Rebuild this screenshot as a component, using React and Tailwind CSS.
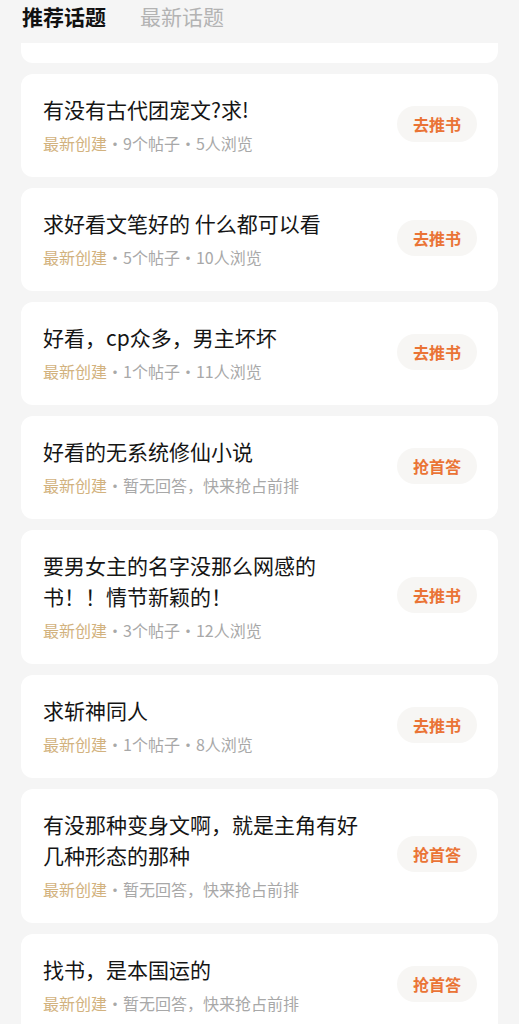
const topics = [
  { title: "有没有古代团宠文?求!", meta: "9个帖子·5人浏览", action: "去推书" },
  { title: "求好看文笔好的 什么都可以看", meta: "5个帖子·10人浏览", action: "去推书" },
  { title: "好看，cp众多，男主坏坏", meta: "1个帖子·11人浏览", action: "去推书" },
  { title: "好看的无系统修仙小说", meta: "暂无回答，快来抢占前排", action: "抢首答" },
  { title: "要男女主的名字没那么网感的书！！情节新颖的！", meta: "3个帖子·12人浏览", action: "去推书" },
  { title: "求斩神同人", meta: "1个帖子·8人浏览", action: "去推书" },
  { title: "有没那种变身文啊，就是主角有好几种形态的那种", meta: "暂无回答，快来抢占前排", action: "抢首答" },
  { title: "找书，是本国运的", meta: "暂无回答，快来抢占前排", action: "抢首答" },
];

export default function App() {
  return (
    <div
      className="min-h-screen h-[1024px] overflow-hidden bg-[#f5f5f5]"
      style={{ fontFamily: '"Noto Sans CJK SC", "Noto Sans", sans-serif' }}
    >
      {/* TABS */}
      <div className="h-[43px] flex items-center gap-[34px] px-[22px] pb-[10px]">
        <span className="text-[21px] font-bold text-[#111]">推荐话题</span>
        <span className="text-[21px] text-[#b3b3b3]">最新话题</span>
      </div>

      <div className="flex flex-col gap-[11px] px-[21px]">
        {/* cut-off card from scroll */}
        <div className="h-[20px] bg-white rounded-b-[12px]"></div>

        {topics.map((t, i) => (
          <div
            key={i}
            className="bg-white rounded-[12px] flex items-center justify-between pl-[22px] pr-[21px] pt-[20px] pb-[24px]"
          >
            <div className="flex-1 pr-[28px]">
              <div className="text-[21px] leading-[31px] text-[#151515]">{t.title}</div>
              <div className="mt-[8px] text-[16px] leading-[20px] text-[#a8a8a8]">
                <span className="text-[#d2b27e]">最新创建</span>·{t.meta}
              </div>
            </div>
            <div className="shrink-0 w-[80px] h-[36px] rounded-full bg-[#f7f6f4] flex items-center justify-center text-[16px] font-bold text-[#ea7436]">
              {t.action}
            </div>
          </div>
        ))}
      </div>
    </div>
  );
}
